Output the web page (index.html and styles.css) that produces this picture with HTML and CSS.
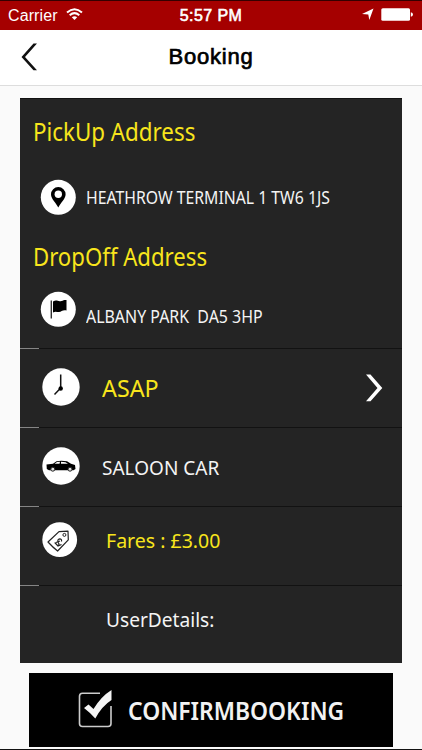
FILE: index.html
```html
<!DOCTYPE html>
<html lang="en">
<head>
<meta charset="utf-8">
<title>Booking</title>
<link rel="stylesheet" href="styles.css">
</head>
<body>
<div class="status">
  <div class="carrier"><span>Carrier</span>
    <svg width="17" height="13" viewBox="0 0 17 13" fill="none" stroke="#fff" stroke-width="2"><path d="M1 4.5Q8.500-2 16 4.500M3.700 7.200Q8.500 3 13.300 7.200"/><path d="M5.800 9.300Q8.500 7 11.200 9.300L8.500 12z" fill="#fff" stroke="none"/></svg>
  </div>
  <div class="time">5:57 PM</div>
  <div class="indicators">
    <svg width="12" height="13" viewBox="0 0 12 13"><path d="M11.500.5 7.300 12 6.300 6.500 0 6z" fill="#fff"/></svg>
    <svg width="33" height="13" viewBox="0 0 33 13" fill="#fff"><rect x=".3" y=".3" width="28.700" height="12.400" rx="1.500"/><path d="M29.800 4.300Q32 4.600 32 6.500T29.800 8.700z"/></svg>
  </div>
</div>
<header class="nav">
  <svg class="back" width="16" height="28" viewBox="0 0 16 28"><path d="M12.500 .5H16L4 14 16 27.300h-3.500L.5 14z" fill="#111"/></svg>
  <h1>Booking</h1>
</header>
<main>
  <section class="panel">
    <div class="addresses">
      <h2><span class="pick">PickUp Address</span></h2>
      <div class="address">
        <svg class="disc" width="36" height="36" viewBox="0 0 36 36"><circle cx="18.300" cy="18.300" r="17.500" fill="#fff"/><path d="M18.300 28.500C15.800 23.500 11 20 11 15.300a7.300 7.300 0 0 1 14.600 0C25.600 20 20.800 23.500 18.300 28.500z" fill="#000"/><circle cx="18.300" cy="15.300" r="3.700" fill="#fff"/></svg>
        <span class="heathrow">HEATHROW TERMINAL 1 TW6 1JS</span>
      </div>
      <h2 class="drop-title"><span class="drop">DropOff Address</span></h2>
      <div class="address second">
        <svg class="disc" width="36" height="36" viewBox="0 0 36 36"><circle cx="18.300" cy="18.300" r="17.500" fill="#fff"/><path d="M11.300 9.500V27.500" stroke="#333" stroke-width="1.400"/><path d="M13 10.500c4-2.300 5 .8 8.500-.5 2-.8 3-1.300 5-1v10.500c-4-1-5 1.500-7.500 1.500s-3.500-1-6 .5z" fill="#000"/></svg>
        <span class="albany">ALBANY PARK&nbsp; DA5 3HP</span>
      </div>
    </div>
    <div class="row">
      <svg class="disc raised" width="38" height="38" viewBox="0 0 38 38"><circle cx="19" cy="19" r="18.700" fill="#fff"/><path d="M18.700 6.500V20L12.500 26.500" fill="none" stroke="#111" stroke-width="1.500"/><circle cx="18.700" cy="20.500" r="2.200"/></svg>
      <span class="asap yellow">ASAP</span>
      <svg class="next" width="17" height="28" viewBox="0 0 17 28"><path d="M0 .5h4.500L16.300 14 4.500 27.300H0L11.500 14z" fill="#fff"/></svg>
    </div>
    <div class="row">
      <svg class="disc raised" width="38" height="38" viewBox="0 0 38 38"><circle cx="19" cy="19" r="18.700" fill="#fff"/><path fill-rule="evenodd" d="M4.500 17.500 11 16.800 14.500 14.300Q19 13.300 25 14.300L29 16.800 33 18 33.500 22 31.500 23.300H7L4.800 22zM12.500 16.800H17.500L18 14.800 15 15zM19 14.800V16.800H26L23.500 15.200z"/><g fill="#ddd" stroke="#222"><circle cx="10.800" cy="22.200" r="2"/><circle cx="28" cy="22.200" r="2"/></g></svg>
      <span class="saloon">SALOON CAR</span>
    </div>
    <div class="row fare">
      <svg class="disc" width="36" height="36" viewBox="0 0 36 36"><circle cx="17.700" cy="17.700" r="17.400" fill="#fff"/><path d="M6 20 17 9.600 26 9.200 26.300 17.800 15.600 29Q11 25.500 6 20z" fill="none" stroke="#222" stroke-width="1.200" stroke-linejoin="round"/><circle cx="22.400" cy="12.900" r="1.500" fill="none" stroke="#222"/><path d="M19.500 19.500Q20 16.800 17.700 16.800 15.300 17.200 16 20L17 22Q16.800 24 15 23.500M12.700 20.500 16 24 19.500 22.500M14 20.500 18 19" fill="none" stroke="#222" stroke-width="1.200"/></svg>
      <span class="fares yellow">Fares : £3.00</span>
    </div>
    <div class="row user"><span class="details">UserDetails:</span></div>
  </section>
  <button class="confirm">
    <svg width="35" height="40" viewBox="0 0 35 40"><path d="M22 4.300H4.500Q1.500 4.300 1.500 7.300V34.500Q1.500 37.500 4.500 37.500H30Q33 37.500 33 34.500V17" fill="none" stroke="#ccc" stroke-width="1.600"/><path d="M6 19 10.500 15.500 15.500 20Q23 7.500 33.500 1V11Q24 17 17.300 29.500 12 23.500 6 19z" fill="#f4f4f4"/></svg>
    <span>CONFIRMBOOKING</span>
  </button>
</main>
</body>
</html>
```
FILE: styles.css
```css
* { box-sizing: border-box; }
body { margin: 0; height: 750px; display: flex; flex-direction: column; overflow: hidden; background: #fafafa; font-family: "Noto Sans", sans-serif; }
h1, h2 { margin: 0; font-weight: 400; }
svg { display: block; flex: none; }
.status { height: 30px; flex: none; display: grid; grid-template-columns: 1fr auto 1fr; align-items: center; padding: 0 8px; background: #a50000; border-top: 1px solid #350000; color: #fff; font: 16px "Liberation Sans", sans-serif; }
.carrier { display: flex; align-items: center; gap: 8px; letter-spacing: .1px; }
.carrier svg { margin-top: -3px; }
.time { letter-spacing: .4px; -webkit-text-stroke: .6px #fff; }
.indicators { display: flex; justify-content: flex-end; align-items: center; gap: 7px; margin-top: -2px; }
.nav { height: 56px; flex: none; display: grid; grid-template-columns: 1fr auto 1fr; align-items: center; background: #fff; border-bottom: 1px solid #ddd; padding-bottom: 2px; }
.back { margin-left: 21px; }
.nav h1 { font: 22px "Liberation Sans", sans-serif; letter-spacing: .8px; color: #000; -webkit-text-stroke: .7px #000; }
main { height: 664px; padding-top: 12px; border-bottom: 1px solid #111; }
.panel { width: 382px; margin-left: 20px; height: 565px; background: #242424; border-top: 1px solid #111; color: #f4f4f4; }
.panel span { display: inline-block; white-space: nowrap; transform-origin: left center; }
.addresses { height: 249px; padding: 14px 0 0 13px; }
h2 { font-size: 24.500px; line-height: 38px; color: #f8e51c; }
.address { display: flex; align-items: center; height: 36px; margin-top: 28px; padding-left: 7px; gap: 10px; font-size: 17.500px; }
.drop-title { margin-top: 23px; }
.second { margin-top: 15px; }
.second span { margin-top: 13px; }
.row { height: 79px; display: flex; align-items: center; padding-left: 22px; border-top: 1px solid; border-image: linear-gradient(90deg, #858585 20px, #121212 20px) 1; font-size: 20.500px; }
.row span { margin-left: 22px; }
.raised { margin-top: -2px; }
.yellow { color: #f8e51c; }
.row .asap { font-size: 24px; margin-top: -1px; }
.next { margin-left: auto; margin-right: 19px; margin-top: 0; }
.saloon { margin-top: -1px; }
.fare { padding-bottom: 12px; }
.row .fares { margin-left: 28px; margin-top: -1px; }
.row .details { margin-left: 64px; margin-top: -12px; }
.confirm { width: 364px; height: 74px; margin: 10px 0 0 29px; padding: 0 0 0 49px; border: 0; background: #000; color: #f2f2f2; display: flex; align-items: center; gap: 15px; font: 600 26px "Noto Sans", sans-serif; }
.confirm svg { margin-top: -2px; }
.confirm span { transform-origin: left center; margin-top: 0; transform: scaleX(.88); }
.pick { transform: scaleX(.912); }
.drop { transform: scaleX(.904); }
.heathrow { transform: scaleX(.902); }
.albany { transform: scaleX(.91); }
.asap { transform: scaleX(.97); }
.saloon { transform: scaleX(.928); }
.fares { transform: scaleX(.952); }
.details { transform: scaleX(.933); }
```
